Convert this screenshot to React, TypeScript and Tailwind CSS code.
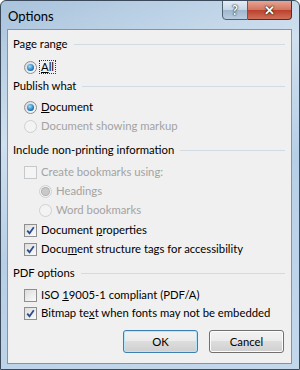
import React from 'react';

const FONT = "font-['Lato',sans-serif]";

function Radio({ checked = false, disabled = false }: { checked?: boolean; disabled?: boolean }) {
  return (
    <span
      className={`w-[13px] h-[13px] shrink-0 rounded-full border flex items-center justify-center ${
        disabled
          ? 'border-[#cdd1d4] bg-[#f3f3f3]'
          : 'border-[#8e8f8f] bg-[linear-gradient(135deg,#d8d8d8,#fafafa)]'
      }`}
    >
      {checked && (
        <span
          className={`w-[7px] h-[7px] rounded-full ${
            disabled
              ? 'bg-[#c9c9c9] ring-1 ring-[#b0b0b0]'
              : 'bg-[radial-gradient(circle_at_40%_35%,#a6e0fa,#2a86c8_55%,#0b3d73)]'
          }`}
        />
      )}
    </span>
  );
}

function Check({ checked = false, disabled = false }: { checked?: boolean; disabled?: boolean }) {
  return (
    <span
      className={`w-[13px] h-[13px] shrink-0 border flex items-center justify-center ${
        disabled
          ? 'border-[#c6c9cc] bg-[#f4f4f4]'
          : 'border-[#8f8f8f] bg-[linear-gradient(135deg,#dcdcdc,#fbfbfb)]'
      }`}
    >
      {checked && (
        <svg width="9" height="9" viewBox="0 0 9 9">
          <path d="M1.2 4.6 L3.5 7.2 L7.8 1.2" fill="none" stroke="#2d4c8f" strokeWidth="1.8" />
        </svg>
      )}
    </span>
  );
}

function Heading({ label, top }: { label: string; top: string }) {
  return (
    <div className={`flex items-center h-[18px] pl-[5px] pr-[6px] ${top}`}>
      <span className="text-black whitespace-nowrap">{label}</span>
      <span className="flex-1 ml-[6px] border-t border-[#d0dbe3]" />
    </div>
  );
}

function Btn({ label, primary = false }: { label: string; primary?: boolean }) {
  return (
    <div
      className={`w-[75px] h-[23px] rounded-[3px] border flex items-center justify-center text-black ${
        primary
          ? 'border-[#3c7fb1] shadow-[inset_0_0_0_1px_#b6e6fb]'
          : 'border-[#707070] shadow-[inset_0_0_0_1px_#fcfcfc]'
      } bg-[linear-gradient(#f2f2f2_0%,#ebebeb_50%,#dddddd_50%,#cfcfcf_100%)]`}
    >
      {label}
    </div>
  );
}

export default function App() {
  return (
    <div
      className={`${FONT} relative w-[300px] h-[370px] overflow-hidden text-[11.3px] leading-none whitespace-nowrap rounded-t-[6px] border border-[#3a4a5a] bg-[linear-gradient(160deg,#a9c3dc_0%,#cfe0ef_30%,#b7cfe6_55%,#c4d8ec_100%)]`}
    >
      {/* title bar */}
      <div className="h-[28px] flex items-center pl-[7px] pt-[2px] text-black text-[13px]">Options</div>

      {/* caption buttons */}
      <div className="absolute top-[-1px] right-[7px] flex">
        <div className="w-[26px] h-[20px] rounded-bl-[4px] border border-[#4f6272] bg-[linear-gradient(#e3ecf4_0%,#c5d6e6_50%,#9fb6cc_50%,#b9cde0_100%)] flex items-center justify-center">
          <span className="text-white font-bold text-[13px] [text-shadow:0_0_1px_#000,0_0_2px_#233]">?</span>
        </div>
        <div className="w-[44px] h-[20px] rounded-br-[4px] border border-l-0 border-[#5a2a26] bg-[linear-gradient(#e8a493_0%,#d27460_50%,#b8412c_50%,#d0705a_100%)] flex items-center justify-center">
          <span className="text-white font-bold text-[13px] [text-shadow:0_0_1px_#000,0_0_2px_#300]">✕</span>
        </div>
      </div>

      {/* client area */}
      <div className="ml-[6px] w-[285px] h-[335px] border border-[#8194a8] bg-[#f0f0f0] flex flex-col">
        <Heading label="Page range" top="mt-[5px]" />
        <div className="flex items-center h-[18px] pl-[16px] gap-[3px] mt-[5px]">
          <Radio checked />
          <span className="px-[1px] outline outline-1 outline-dotted outline-[#333] text-black">
            <u>A</u>ll
          </span>
        </div>

        <Heading label="Publish what" top="mt-[1px]" />
        <div className="flex items-center h-[18px] pl-[16px] gap-[4px] mt-[3px]">
          <Radio checked />
          <span className="text-black">
            <u>D</u>ocument
          </span>
        </div>
        <div className="flex items-center h-[18px] pl-[16px] gap-[4px] mt-[1px]">
          <Radio disabled />
          <span className="text-[#a3a3a3]">Document showing markup</span>
        </div>

        <Heading label="Include non-printing information" top="mt-[6px]" />
        <div className="flex items-center h-[18px] pl-[16px] gap-[4px] mt-[4px]">
          <Check disabled />
          <span className="text-[#a3a3a3]">Create bookmarks using:</span>
        </div>
        <div className="flex items-center h-[18px] pl-[31px] gap-[4px] mt-[1px]">
          <Radio checked disabled />
          <span className="text-[#a3a3a3]">Headings</span>
        </div>
        <div className="flex items-center h-[18px] pl-[31px] gap-[4px] mt-[1px]">
          <Radio disabled />
          <span className="text-[#a3a3a3]">Word bookmarks</span>
        </div>
        <div className="flex items-center h-[18px] pl-[16px] gap-[4px] mt-[2px]">
          <Check checked />
          <span className="text-black">
            Document <u>p</u>roperties
          </span>
        </div>
        <div className="flex items-center h-[18px] pl-[16px] gap-[4px] mt-[1px]">
          <Check checked />
          <span className="text-black">
            Docu<u>m</u>ent structure tags for accessibility
          </span>
        </div>

        <Heading label="PDF options" top="mt-[6px]" />
        <div className="flex items-center h-[18px] pl-[16px] gap-[4px] mt-[4px]">
          <Check />
          <span className="text-black">
            ISO <u>1</u>9005-1 compliant (PDF/A)
          </span>
        </div>
        <div className="flex items-center h-[18px] pl-[16px] gap-[4px]">
          <Check checked />
          <span className="text-black">
            Bitmap te<u>x</u>t when fonts may not be embedded
          </span>
        </div>

        <div className="flex justify-end gap-[11px] pr-[7px] mt-[8px]">
          <Btn label="OK" primary />
          <Btn label="Cancel" />
        </div>
      </div>
    </div>
  );
}
